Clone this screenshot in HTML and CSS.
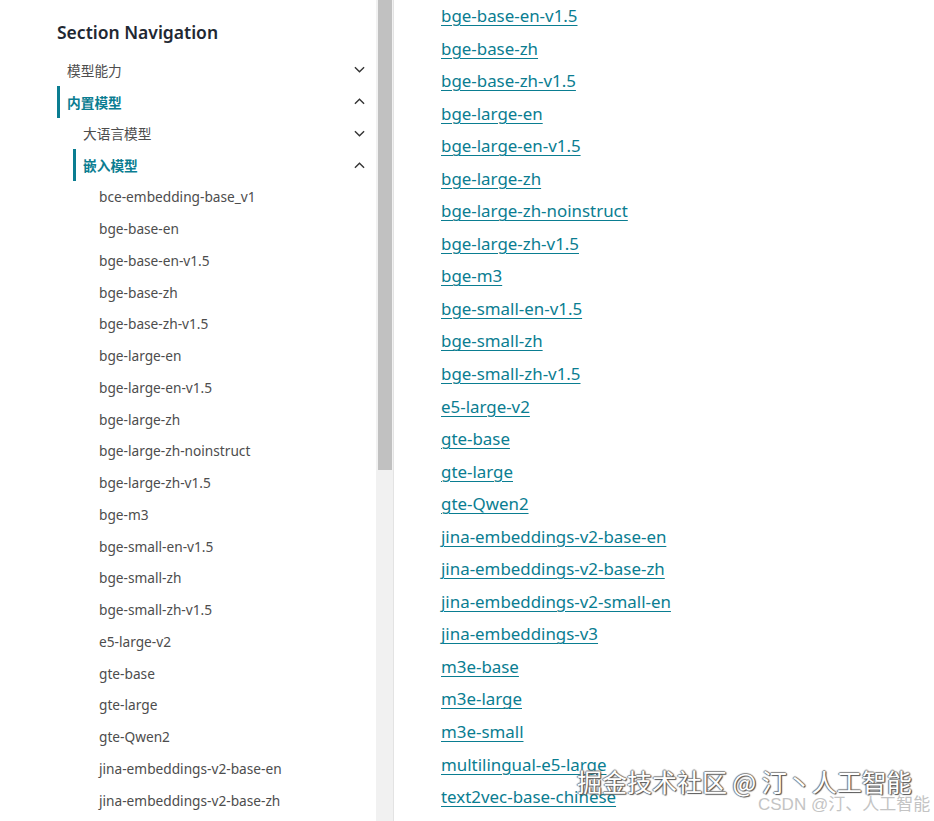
FILE: index.html
```html
<html>
    <head>
        <meta charset="utf-8" />
        <title>嵌入模型</title>
        <link rel="stylesheet" href="styles.css">
    </head>
    <body>
        <div class="page">
            <nav class="sidebar">
                <div class="sidebar-inner">
                    <h2 class="nav-title">Section Navigation</h2>
                    <ul class="nav">
                        <li class="nav-item lvl1">
                            <a href="#">模型能力</a>
                            <svg class="chev" viewBox="0 0 12 7"><path d="M1 1l5 5 5-5"/></svg>
                        </li>
                        <li class="nav-item lvl1 active">
                            <a href="#">内置模型</a>
                            <svg class="chev" viewBox="0 0 12 7"><path d="M1 6l5-5 5 5"/></svg>
                        </li>
                        <li class="nav-item lvl2">
                            <a href="#">大语言模型</a>
                            <svg class="chev" viewBox="0 0 12 7"><path d="M1 1l5 5 5-5"/></svg>
                        </li>
                        <li class="nav-item lvl2 active">
                            <a href="#">嵌入模型</a>
                            <svg class="chev" viewBox="0 0 12 7"><path d="M1 6l5-5 5 5"/></svg>
                        </li>
                        <li class="nav-item lvl3"><a href="#">bce-embedding-base_v1</a></li>
                        <li class="nav-item lvl3"><a href="#">bge-base-en</a></li>
                        <li class="nav-item lvl3"><a href="#">bge-base-en-v1.5</a></li>
                        <li class="nav-item lvl3"><a href="#">bge-base-zh</a></li>
                        <li class="nav-item lvl3"><a href="#">bge-base-zh-v1.5</a></li>
                        <li class="nav-item lvl3"><a href="#">bge-large-en</a></li>
                        <li class="nav-item lvl3"><a href="#">bge-large-en-v1.5</a></li>
                        <li class="nav-item lvl3"><a href="#">bge-large-zh</a></li>
                        <li class="nav-item lvl3"><a href="#">bge-large-zh-noinstruct</a></li>
                        <li class="nav-item lvl3"><a href="#">bge-large-zh-v1.5</a></li>
                        <li class="nav-item lvl3"><a href="#">bge-m3</a></li>
                        <li class="nav-item lvl3"><a href="#">bge-small-en-v1.5</a></li>
                        <li class="nav-item lvl3"><a href="#">bge-small-zh</a></li>
                        <li class="nav-item lvl3"><a href="#">bge-small-zh-v1.5</a></li>
                        <li class="nav-item lvl3"><a href="#">e5-large-v2</a></li>
                        <li class="nav-item lvl3"><a href="#">gte-base</a></li>
                        <li class="nav-item lvl3"><a href="#">gte-large</a></li>
                        <li class="nav-item lvl3"><a href="#">gte-Qwen2</a></li>
                        <li class="nav-item lvl3"><a href="#">jina-embeddings-v2-base-en</a></li>
                        <li class="nav-item lvl3"><a href="#">jina-embeddings-v2-base-zh</a></li>
                    </ul>
                </div>
                <div class="scrollbar"><div class="thumb"></div></div>
            </nav>

            <main class="content">
                <ul class="model-list">
                    <li><a href="#">bge-base-en-v1.5</a></li>
                    <li><a href="#">bge-base-zh</a></li>
                    <li><a href="#">bge-base-zh-v1.5</a></li>
                    <li><a href="#">bge-large-en</a></li>
                    <li><a href="#">bge-large-en-v1.5</a></li>
                    <li><a href="#">bge-large-zh</a></li>
                    <li><a href="#">bge-large-zh-noinstruct</a></li>
                    <li><a href="#">bge-large-zh-v1.5</a></li>
                    <li><a href="#">bge-m3</a></li>
                    <li><a href="#">bge-small-en-v1.5</a></li>
                    <li><a href="#">bge-small-zh</a></li>
                    <li><a href="#">bge-small-zh-v1.5</a></li>
                    <li><a href="#">e5-large-v2</a></li>
                    <li><a href="#">gte-base</a></li>
                    <li><a href="#">gte-large</a></li>
                    <li><a href="#">gte-Qwen2</a></li>
                    <li><a href="#">jina-embeddings-v2-base-en</a></li>
                    <li><a href="#">jina-embeddings-v2-base-zh</a></li>
                    <li><a href="#">jina-embeddings-v2-small-en</a></li>
                    <li><a href="#">jina-embeddings-v3</a></li>
                    <li><a href="#">m3e-base</a></li>
                    <li><a href="#">m3e-large</a></li>
                    <li><a href="#">m3e-small</a></li>
                    <li><a href="#">multilingual-e5-large</a></li>
                    <li><a href="#">text2vec-base-chinese</a></li>
                </ul>
            </main>
        </div>

        <!-- 水印 -->
        <div class="watermark">掘金技术社区 @ 汀丶人工智能</div>
        <div class="watermark-csdn">CSDN @汀、人工智能</div>
    </body>
</html>
```

FILE: styles.css
```css
body, html {
    margin: 0;
    padding: 0;
    background: #fff;
    font-family: "Noto Sans", "Noto Sans CJK SC", sans-serif;
}

.page {
    display: flex;
    height: 821px;
    overflow: hidden;
}

/* 左侧导航 */
.sidebar {
    display: flex;
    flex: 0 0 auto;
    width: 393px;
    border-right: 1px solid #e3e3e3;
}

.sidebar-inner {
    width: 318px;
    padding: 0 8px 0 57px;
}

.nav-title {
    margin: 18px 0 8px;
    font-size: 17.5px;
    font-weight: 600;
    color: #222832;
    line-height: 28px;
}

.nav {
    list-style: none;
    margin: 0;
    padding: 0;
}

.nav-item {
    display: flex;
    align-items: center;
    justify-content: space-between;
    height: 31.75px;
    border-left: 3px solid transparent;
    padding-left: 7px;
    font-size: 13.7px;
}

.nav-item a {
    color: #4d4d4d;
    text-decoration: none;
}

.lvl2 {
    margin-left: 16px;
}

.lvl3 {
    margin-left: 32px;
}

.nav-item.active {
    border-left-color: #0a7d91;
}

.nav-item.active a {
    color: #0a7d91;
    font-weight: 700;
}

.chev {
    width: 11px;
    height: 7px;
    fill: none;
    stroke: #333;
    stroke-width: 1.5;
    margin-right: 3px;
}

.scrollbar {
    width: 17px;
    background: #f1f1f1;
    flex: 0 0 auto;
}

.thumb {
    width: 14px;
    height: 470px;
    margin-left: 2px;
    background: #c1c1c1;
}

/* 正文链接列表 */
.content {
    padding-left: 47px;
}

.model-list {
    list-style: none;
    margin: 0;
    padding: 0;
}

.model-list li {
    line-height: 32.54px;
    font-size: 16.9px;
}

.model-list a {
    color: #0a7d91;
    text-decoration: underline;
    text-underline-offset: 3px;
    text-decoration-thickness: 1px;
}

.watermark {
    position: absolute;
    left: 577px;
    top: 765px;
    font-family: "Noto Sans CJK SC", sans-serif;
    font-size: 25px;
    line-height: 33px;
    color: #fff;
    text-shadow: 1px 1px 1px #555, -1px 0 1px #777, 0 -1px 1px #888, 1px 0 1px #666;
}

.watermark-csdn {
    position: absolute;
    left: 758px;
    top: 794px;
    font-family: "Liberation Sans", "Noto Sans CJK SC", sans-serif;
    font-size: 17px;
    line-height: 22px;
    color: #c4c4c4;
}
```
